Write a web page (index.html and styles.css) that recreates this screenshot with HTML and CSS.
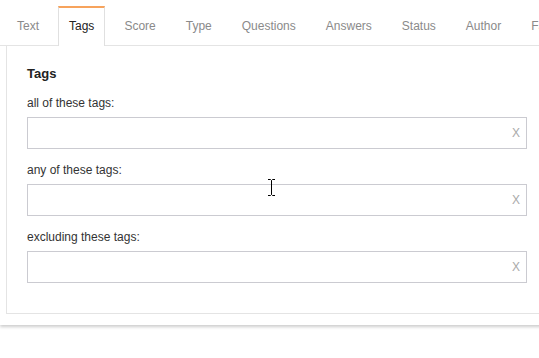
FILE: index.html
```html
<!DOCTYPE html>
<html lang="en">
<head>
    <meta charset="UTF-8">
    <meta name="viewport" content="width=device-width, initial-scale=1.0">
    <title>Search Filters</title>
    <link rel="stylesheet" href="styles.css">
</head>
<body>
    <div class="card">
        <ul class="tabs">
            <li class="tab">Text</li>
            <li class="tab active">Tags</li>
            <li class="tab">Score</li>
            <li class="tab">Type</li>
            <li class="tab">Questions</li>
            <li class="tab">Answers</li>
            <li class="tab">Status</li>
            <li class="tab">Author</li>
            <li class="tab">Favorites</li>
        </ul>
        <div class="panel">
            <h2>Tags</h2>
            <label class="field-label">all of these tags:</label>
            <div class="tag-input">
                <input type="text">
                <span class="clear">X</span>
            </div>
            <label class="field-label">any of these tags:</label>
            <div class="tag-input">
                <input type="text">
                <span class="clear">X</span>
            </div>
            <label class="field-label">excluding these tags:</label>
            <div class="tag-input">
                <input type="text">
                <span class="clear">X</span>
            </div>
        </div>
    </div>

    <svg class="cursor" width="9" height="17" viewBox="0 0 9 17">
        <path d="M1 0.5h2.5l1 1 1-1H8M4.5 1.5v14M1 16.5h2.5l1-1 1 1H8" fill="none" stroke="#000" stroke-width="1"/>
    </svg>
</body>
</html>
```

FILE: styles.css
```css
html, body {
    margin: 0;
    padding: 0;
    overflow: hidden;
    background-color: #fff;
}
body {
    font-family: "Liberation Sans", Arial, sans-serif;
    font-size: 12px;
    color: #333;
    position: relative;
    height: 358px;
}
.card {
    width: 554px;
    background-color: #fff;
    padding-bottom: 11px;
    box-shadow: 0 2px 3px rgba(0,0,0,0.2);
}
.tabs {
    display: flex;
    list-style: none;
    margin: 0;
    padding: 6px 0 0 6px;
    border-bottom: 1px solid #e4e4e4;
    white-space: nowrap;
}
.tab {
    line-height: 37px;
    padding: 0 10px;
    margin-right: 8px;
    border: 1px solid transparent;
    border-top: 2px solid transparent;
    border-bottom: none;
    color: #8a8a8a;
}
.tab.active {
    color: #222;
    background-color: #fff;
    border-color: #e0e0e0;
    border-top-color: #f7a35c;
    margin-bottom: -1px;
    padding-bottom: 1px;
}
.panel {
    margin: 0 6px;
    padding: 19px 20px 30px;
    border: 1px solid #e4e4e4;
    border-top: none;
}
.panel h2 {
    margin: 0 0 12px 0;
    font-size: 13px;
    line-height: 18px;
    color: #222;
}
.field-label {
    display: block;
    line-height: 16px;
    margin-bottom: 6px;
    color: #333;
}
.tag-input {
    display: flex;
    align-items: center;
    height: 30px;
    border: 1px solid #cbcbd1;
    margin-bottom: 13px;
}
.tag-input:last-child {
    margin-bottom: 0;
}
.tag-input input {
    flex: 1;
    border: none;
    outline: none;
    height: 100%;
    padding: 0 6px;
    background: transparent;
    font-family: inherit;
}
.clear {
    color: #aaa;
    font-size: 12px;
    padding: 0 6px 0 4px;
    cursor: pointer;
}
.cursor {
    position: absolute;
    left: 267px;
    top: 179px;
}
```
